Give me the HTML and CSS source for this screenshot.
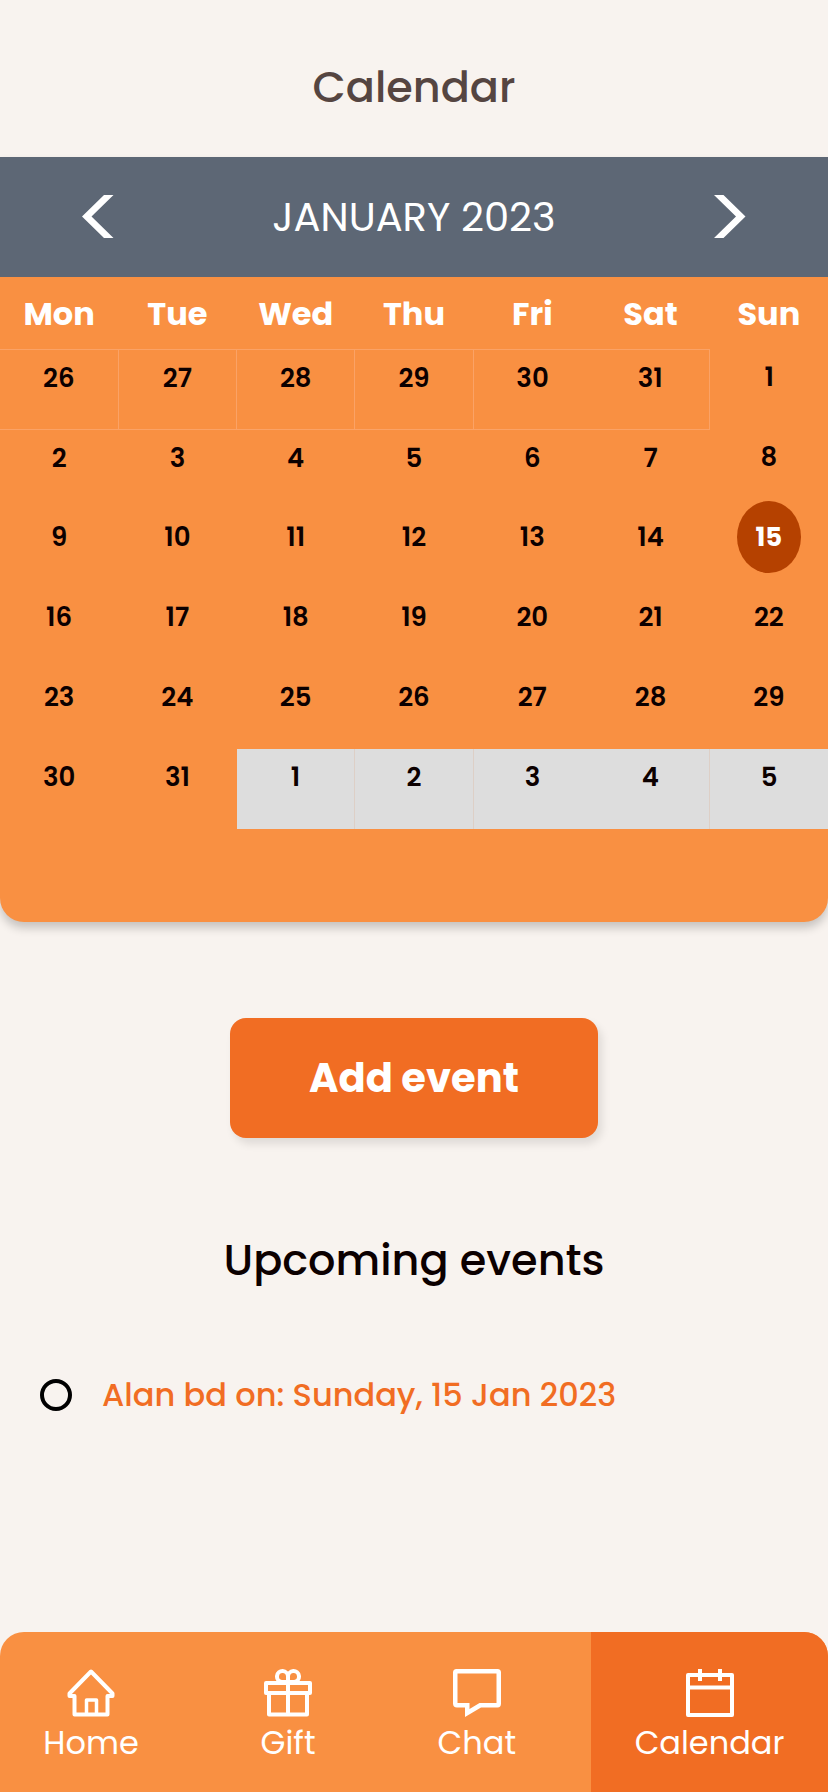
FILE: index.html
```html
<!DOCTYPE html>
<html lang="en">
<head>
<meta charset="utf-8">
<meta name="viewport" content="width=device-width, initial-scale=1">
<title>Calendar</title>
<link rel="stylesheet" href="styles.css">
</head>
<body>
<header class="page-header"><h1 class="page-title">Calendar</h1></header>
<main class="content">
  <section class="calendar" aria-label="January 2023">
    <div class="month-bar">
      <button class="month-step" type="button" aria-label="Previous month">
        <svg class="chevron" viewBox="0 0 32 44" aria-hidden="true"><path d="M22 0h9.500L9.500 21.500 31.500 43H22L0 21.500z"/></svg>
      </button>
      <h2 class="month-name">JANUARY 2023</h2>
      <button class="month-step" type="button" aria-label="Next month">
        <svg class="chevron" viewBox="0 0 32 44" aria-hidden="true"><path d="M9.500 0H0l22 21.500L0 43h9.500l22-21.500z"/></svg>
      </button>
    </div>
    <table class="days">
      <thead><tr><th>Mon</th><th>Tue</th><th>Wed</th><th>Thu</th><th>Fri</th><th>Sat</th><th>Sun</th></tr></thead>
      <tbody>
        <tr><td class="previous">26</td><td class="previous">27</td><td class="previous">28</td><td class="previous">29</td><td class="previous faint">30</td><td class="previous">31</td><td>1</td></tr>
        <tr><td>2</td><td>3</td><td>4</td><td>5</td><td>6</td><td>7</td><td>8</td></tr>
        <tr><td>9</td><td>10</td><td>11</td><td>12</td><td>13</td><td>14</td><td><span class="today">15</span></td></tr>
        <tr><td>16</td><td>17</td><td>18</td><td>19</td><td>20</td><td>21</td><td>22</td></tr>
        <tr><td>23</td><td>24</td><td>25</td><td>26</td><td>27</td><td>28</td><td>29</td></tr>
        <tr><td>30</td><td>31</td><td class="next">1</td><td class="next">2</td><td class="next faint">3</td><td class="next">4</td><td class="next">5</td></tr>
      </tbody>
    </table>
  </section>
  <button class="add-event" type="button">Add event</button>
  <section class="events">
    <h2 class="events-title">Upcoming events</h2>
    <ul class="event-list">
      <li class="event"><span class="event-mark"></span><span>Alan bd on: Sunday, 15 Jan 2023</span></li>
    </ul>
  </section>
</main>
<nav class="tabs">
  <a class="tab tab-home" href="#">
    <svg class="tab-icon" viewBox="0 0 48 48" aria-hidden="true"><g fill="none" stroke="#fff" stroke-width="4" stroke-linejoin="round"><path d="M24 2.500 2.500 24.500V27h5v18.500h33V27h5v-2.500z"/><path d="M19.500 45V31h10v14" stroke-width="3.500"/></g></svg>
    <span>Home</span>
  </a>
  <a class="tab tab-gift" href="#">
    <svg class="tab-icon" viewBox="0 0 48 48" aria-hidden="true"><g fill="none" stroke="#fff" stroke-width="4" stroke-linejoin="round"><path d="M2 14h44v10H2zM5 24h38v21.500H5zM24 10v35"/><path d="M24 13h-6.500a5.500 5.500 0 1 1 6.500-5.500zM24 13h6.500a5.500 5.500 0 1 0-6.500-5.500z"/></g></svg>
    <span>Gift</span>
  </a>
  <a class="tab tab-chat" href="#">
    <svg class="tab-icon" viewBox="0 0 48 48" aria-hidden="true"><path fill="#fff" fill-rule="evenodd" d="M3.500 0h41Q48 0 48 3.500v31Q48 38.500 44.500 38.500H28L12 48V38.500H4Q0 38.500 0 34.500V3.500Q0 0 3.500 0zM4.500 4.500V34H16.500v6L26.500 34H43.500V4.500z"/></svg>
    <span>Chat</span>
  </a>
  <a class="tab tab-calendar" href="#" aria-current="page">
    <svg class="tab-icon" viewBox="0 0 48 48" aria-hidden="true"><path fill="none" stroke="#fff" stroke-width="4" stroke-linejoin="round" d="M2 6h44v40H2zM2 18.500h44M14 0v12M34 0v12"/></svg>
    <span>Calendar</span>
  </a>
</nav>
</body>
</html>
```
FILE: styles.css
```css
* { box-sizing: border-box; }
body {
  margin: 0;
  min-height: 100vh;
  display: flex;
  flex-direction: column;
  background: #f8f3ef;
  color: #0c0000;
  font-family: Poppins, Inter, "Open Sans", sans-serif;
}
h1, h2, ul { margin: 0; padding: 0; font-weight: 500; }
button { border: 0; font-family: inherit; cursor: pointer; }
.page-header { padding: 55px 24px 38px; text-align: center; }
.page-title { font-size: 43px; line-height: 64px; color: #554541; }
.content { display: flex; flex-direction: column; }
.calendar {
  padding-bottom: 93px;
  background: #f99042;
  border-radius: 0 0 24px 24px;
  box-shadow: 0 6px 10px rgba(0, 0, 0, 0.2);
}
.month-bar {
  display: flex;
  align-items: center;
  justify-content: space-between;
  height: 120px;
  padding: 0 74px;
  background: #5d6775;
}
.month-step { display: flex; padding: 8px; background: none; }
.chevron { width: 32px; height: 44px; fill: #fff; }
.month-name { font-size: 40px; line-height: 56px; font-weight: 400; color: #fff; }
.days { width: 100%; table-layout: fixed; border-collapse: collapse; text-align: center; }
.days th { height: 72px; padding: 2px 0 0; font-size: 32px; line-height: 48px; font-weight: 700; color: #fff; }
.days td { height: 80px; padding: 12px 0 0; vertical-align: top; font-size: 26px; line-height: 32px; font-weight: 600; }
.days .previous { border: 1px solid #fba266; }
.days .previous:first-child { border-left: 0; }
.days .previous.faint { border-right-style: hidden; }
.days .next { background: #ddd; border-right: 1px solid #ddcfc6; }
.days .next.faint, .days .next:last-child { border-right: 0; }
.today { position: relative; z-index: 0; display: inline-block; width: 64px; color: #fff; font-weight: 700; }
.today::before { content: ""; position: absolute; z-index: -1; inset: -20px 0; border-radius: 50%; background: #b54100; }
.add-event {
  align-self: center;
  margin-top: 96px;
  padding: 32px 79px;
  border-radius: 16px;
  background: #f16d23;
  box-shadow: 4px 6px 8px rgba(0, 0, 0, 0.1);
  color: #fff;
  font-size: 40px;
  line-height: 56px;
  font-weight: 700;
}
.events { padding: 90px 40px 40px; }
.events-title { text-align: center; font-size: 43px; line-height: 64px; }
.event-list { margin-top: 79px; list-style: none; }
.event { display: flex; align-items: center; gap: 30px; color: #f16d23; font-size: 32px; line-height: 48px; font-weight: 500; }
.event-mark { width: 32px; height: 32px; border: 4px solid #000; border-radius: 50%; }
.tabs {
  display: flex;
  justify-content: space-between;
  margin-top: auto;
  overflow: hidden;
  border-radius: 24px 24px 0 0;
  background: #f99042;
}
.tab {
  display: flex;
  flex-direction: column;
  align-items: center;
  gap: 2px;
  padding: 37px 0 25px;
  color: #fff;
  font-size: 32px;
  line-height: 48px;
  text-decoration: none;
}
.tab-home { flex-basis: 22%; }
.tab-gift { flex-basis: 18%; }
.tab-chat { flex-basis: 20%; }
.tab-calendar { flex-basis: 237px; background: #f16d23; }
.tab-icon { width: 48px; height: 48px; }
```
